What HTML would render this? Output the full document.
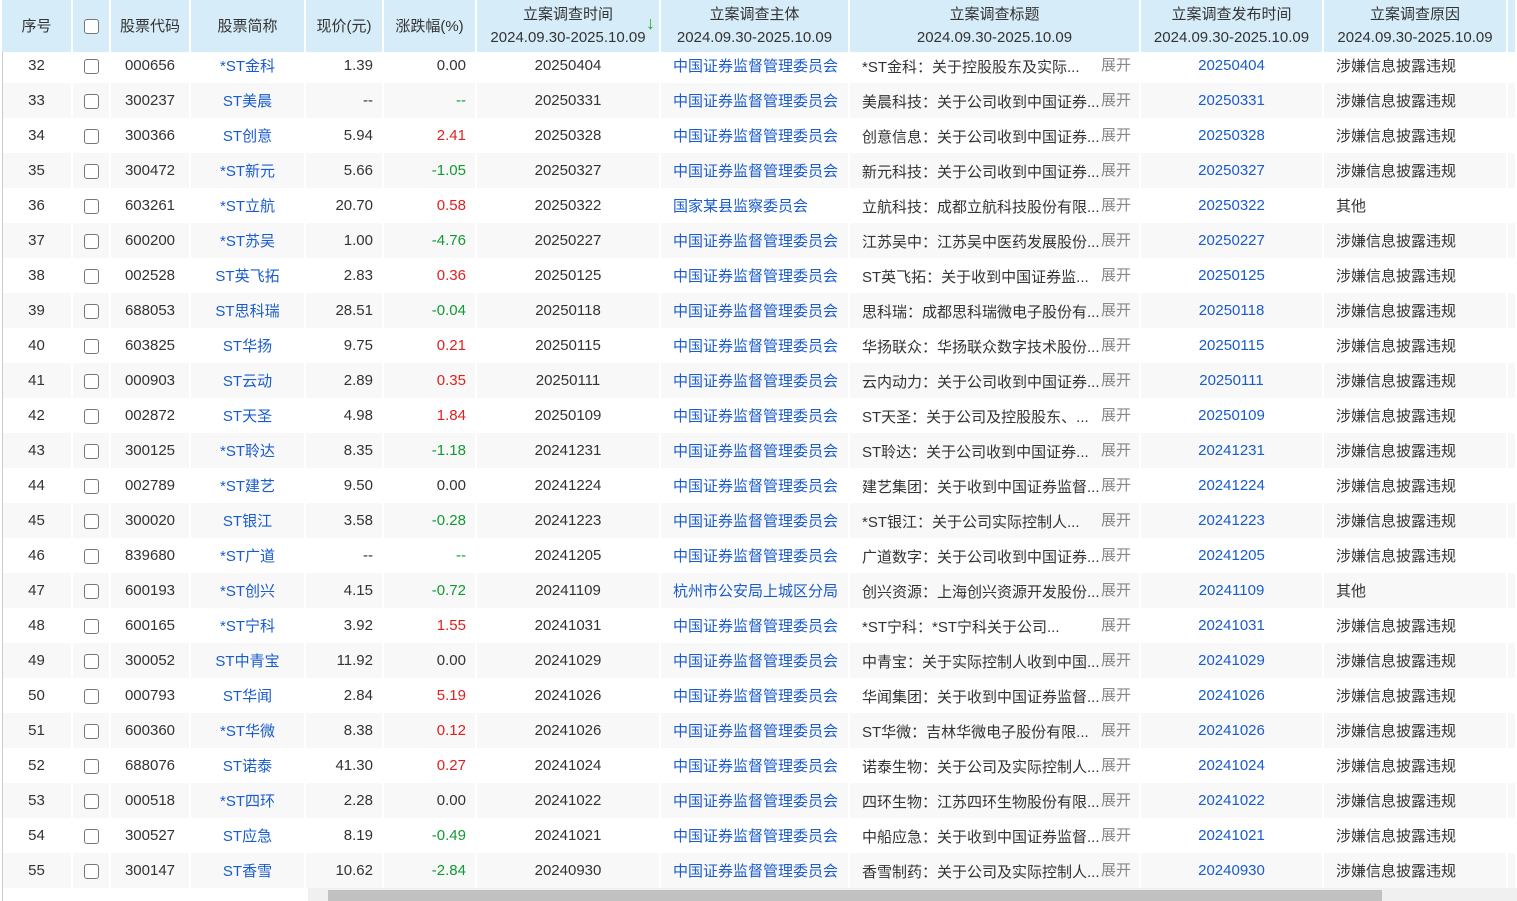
<!DOCTYPE html><html><head><meta charset="utf-8"><style>
body{margin:0;width:1517px;height:901px;overflow:hidden;background:#fff;font-family:"Liberation Sans","Noto Sans CJK SC",sans-serif;font-size:15px;color:#333;position:relative}
table{border-collapse:collapse;table-layout:fixed;position:absolute;left:2px;top:0;width:1515px}
th{background:#d6edf9;font-weight:normal;height:52px;padding:0;border-right:2px solid #fff;color:#333;line-height:23px;font-size:15px}
td{height:35px;padding:0;border-right:2px solid #fff;white-space:nowrap;overflow:hidden}
tr.e td{background:#f8f8f8}
.c{text-align:center}.r{text-align:right;padding-right:9px}
.b{color:#1a5ccc}.up{color:#e02020}.dn{color:#119933}
.cb{display:inline-block;width:13px;height:13px;border:1px solid #777;border-radius:3px;background:#fff;vertical-align:middle}
.t{padding-left:12px}.t span{display:inline-block;width:239px;overflow:hidden;vertical-align:middle}.t i{font-style:normal;color:#888}
#lb{position:absolute;left:2px;top:52px;width:1px;height:849px;background:#ccc}
#sb{position:absolute;left:308px;top:888px;width:1209px;height:13px;background:#f0f0f0}
#th{position:absolute;left:328px;top:890px;width:1054px;height:11px;background:#c1c1c1}
#hd{z-index:2}
</style></head><body>
<table id="rows" style="top:48px">
<colgroup><col style="width:70px"><col style="width:38px"><col style="width:80px"><col style="width:115px"><col style="width:78px"><col style="width:93px"><col style="width:184px"><col style="width:189px"><col style="width:291px"><col style="width:183px"><col style="width:184px"><col></colgroup>
</table>
<table id="hd">
<colgroup><col style="width:70px"><col style="width:38px"><col style="width:80px"><col style="width:115px"><col style="width:78px"><col style="width:93px"><col style="width:184px"><col style="width:189px"><col style="width:291px"><col style="width:183px"><col style="width:184px"><col></colgroup>
<tr><th>序号</th><th><span class="cb"></span></th><th>股票代码</th><th>股票简称</th><th>现价(元)</th><th>涨跌幅(%)</th><th style="position:relative">立案调查时间<br>2024.09.30-2025.10.09<span style="color:#2a2;position:absolute;right:4px;top:12px;font-size:18px">↓</span></th><th>立案调查主体<br>2024.09.30-2025.10.09</th><th>立案调查标题<br>2024.09.30-2025.10.09</th><th>立案调查发布时间<br>2024.09.30-2025.10.09</th><th>立案调查原因<br>2024.09.30-2025.10.09</th><th></th></tr>
</table>
<div id="lb"></div>
<div id="sb"></div><div id="th"></div>
<script>
var d=[
[32,"000656","*ST金科","1.39","0.00","20250404","中国证券监督管理委员会","*ST金科：关于控股股东及实际...","涉嫌信息披露违规"],
[33,"300237","ST美晨","--","--","20250331","中国证券监督管理委员会","美晨科技：关于公司收到中国证券...","涉嫌信息披露违规"],
[34,"300366","ST创意","5.94","2.41","20250328","中国证券监督管理委员会","创意信息：关于公司收到中国证券...","涉嫌信息披露违规"],
[35,"300472","*ST新元","5.66","-1.05","20250327","中国证券监督管理委员会","新元科技：关于公司收到中国证券...","涉嫌信息披露违规"],
[36,"603261","*ST立航","20.70","0.58","20250322","国家某县监察委员会","立航科技：成都立航科技股份有限...","其他"],
[37,"600200","*ST苏吴","1.00","-4.76","20250227","中国证券监督管理委员会","江苏吴中：江苏吴中医药发展股份...","涉嫌信息披露违规"],
[38,"002528","ST英飞拓","2.83","0.36","20250125","中国证券监督管理委员会","ST英飞拓：关于收到中国证券监...","涉嫌信息披露违规"],
[39,"688053","ST思科瑞","28.51","-0.04","20250118","中国证券监督管理委员会","思科瑞：成都思科瑞微电子股份有...","涉嫌信息披露违规"],
[40,"603825","ST华扬","9.75","0.21","20250115","中国证券监督管理委员会","华扬联众：华扬联众数字技术股份...","涉嫌信息披露违规"],
[41,"000903","ST云动","2.89","0.35","20250111","中国证券监督管理委员会","云内动力：关于公司收到中国证券...","涉嫌信息披露违规"],
[42,"002872","ST天圣","4.98","1.84","20250109","中国证券监督管理委员会","ST天圣：关于公司及控股股东、...","涉嫌信息披露违规"],
[43,"300125","*ST聆达","8.35","-1.18","20241231","中国证券监督管理委员会","ST聆达：关于公司收到中国证券...","涉嫌信息披露违规"],
[44,"002789","*ST建艺","9.50","0.00","20241224","中国证券监督管理委员会","建艺集团：关于收到中国证券监督...","涉嫌信息披露违规"],
[45,"300020","ST银江","3.58","-0.28","20241223","中国证券监督管理委员会","*ST银江：关于公司实际控制人...","涉嫌信息披露违规"],
[46,"839680","*ST广道","--","--","20241205","中国证券监督管理委员会","广道数字：关于公司收到中国证券...","涉嫌信息披露违规"],
[47,"600193","*ST创兴","4.15","-0.72","20241109","杭州市公安局上城区分局","创兴资源：上海创兴资源开发股份...","其他"],
[48,"600165","*ST宁科","3.92","1.55","20241031","中国证券监督管理委员会","*ST宁科：*ST宁科关于公司...","涉嫌信息披露违规"],
[49,"300052","ST中青宝","11.92","0.00","20241029","中国证券监督管理委员会","中青宝：关于实际控制人收到中国...","涉嫌信息披露违规"],
[50,"000793","ST华闻","2.84","5.19","20241026","中国证券监督管理委员会","华闻集团：关于收到中国证券监督...","涉嫌信息披露违规"],
[51,"600360","*ST华微","8.38","0.12","20241026","中国证券监督管理委员会","ST华微：吉林华微电子股份有限...","涉嫌信息披露违规"],
[52,"688076","ST诺泰","41.30","0.27","20241024","中国证券监督管理委员会","诺泰生物：关于公司及实际控制人...","涉嫌信息披露违规"],
[53,"000518","*ST四环","2.28","0.00","20241022","中国证券监督管理委员会","四环生物：江苏四环生物股份有限...","涉嫌信息披露违规"],
[54,"300527","ST应急","8.19","-0.49","20241021","中国证券监督管理委员会","中船应急：关于收到中国证券监督...","涉嫌信息披露违规"],
[55,"300147","ST香雪","10.62","-2.84","20240930","中国证券监督管理委员会","香雪制药：关于公司及实际控制人...","涉嫌信息披露违规"]];
var h="";d.forEach(function(r,i){var c=r[4]=="--"?"dn":(r[4].charAt(0)=="-"?"dn":(r[4]=="0.00"?"":"up"));
h+='<tr class="'+(i%2?'e':'')+'"><td class="c">'+r[0]+'</td><td class="c"><span class="cb"></span></td><td class="c">'+r[1]+'</td><td class="c b">'+r[2]+'</td><td class="r">'+r[3]+'</td><td class="r '+c+'">'+r[4]+'</td><td class="c">'+r[5]+'</td><td class="b" style="padding-left:12px">'+r[6]+'</td><td class="t"><span>'+r[7]+'</span><i>展开</i></td><td class="c b">'+r[5]+'</td><td style="padding-left:12px">'+r[8]+'</td><td></td></tr>';});
document.getElementById("rows").insertAdjacentHTML("beforeend",h);
</script>
</body></html>
